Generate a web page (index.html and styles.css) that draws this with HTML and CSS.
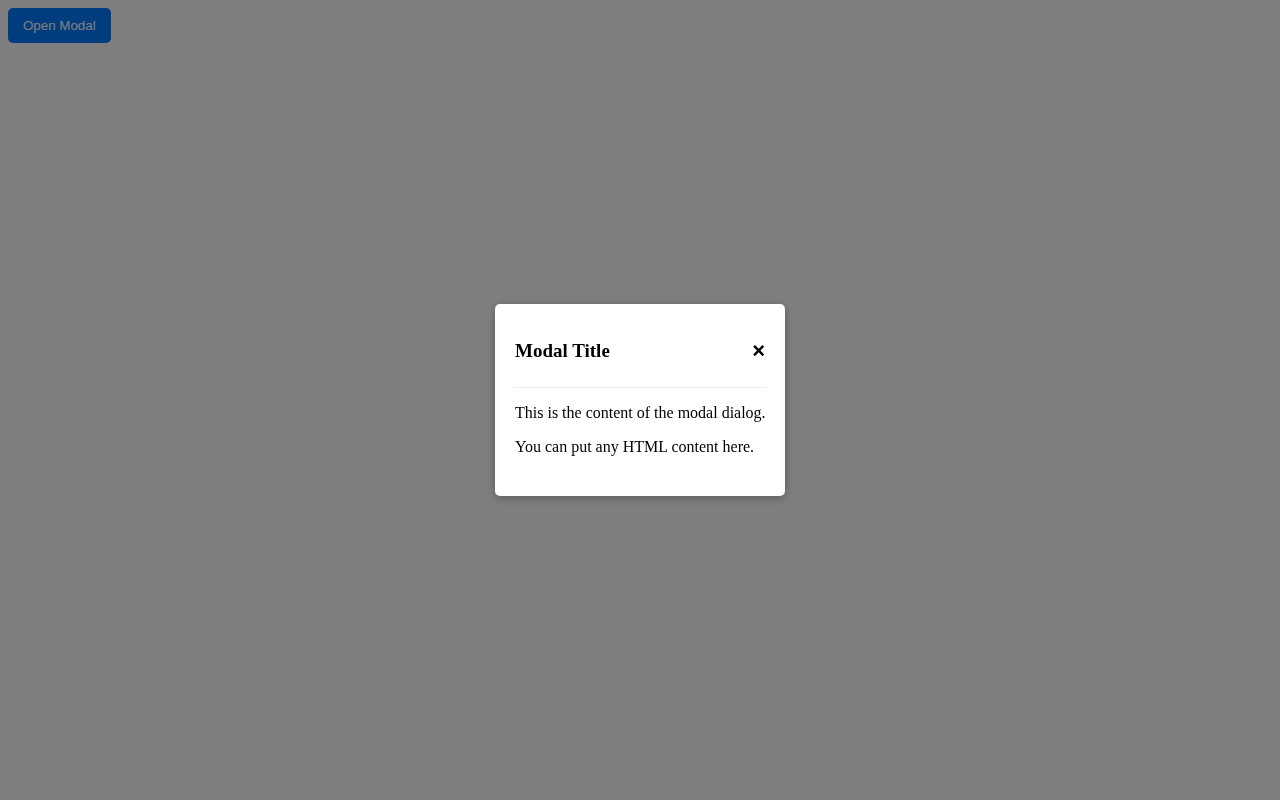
FILE: index.html
```html
<!DOCTYPE html>
<html>
<head>
<meta charset="utf-8">
<link rel="stylesheet" href="styles.css">
</head>
<body>
<button class="open-btn">Open Modal</button>
<div class="overlay">
  <div class="modal">
    <div class="modal-header">
      <h3 class="modal-title">Modal Title</h3>
      <span class="close">&times;</span>
    </div>
    <div class="modal-body">
      <p>This is the content of the modal dialog.</p>
      <p>You can put any HTML content here.</p>
    </div>
  </div>
</div>
</body>
</html>
```

FILE: styles.css
```css
body {
  margin: 8px;
  font-family: "Liberation Serif", "Times New Roman", serif;
}
.open-btn {
  background: #007bff;
  color: #fff;
  border: none;
  border-radius: 5px;
  padding: 10px 15px;
  font-family: "Liberation Sans", Arial, sans-serif;
  font-size: 13.333px;
  line-height: 15px;
}
.overlay {
  position: fixed;
  inset: 0;
  background: rgba(0, 0, 0, 0.5);
  display: flex;
  align-items: center;
  justify-content: center;
}
.modal {
  background: #fff;
  width: 250px;
  padding: 20px 20px 24px;
  border-radius: 5px;
  box-shadow: 0 2px 10px rgba(0, 0, 0, 0.3);
}
.modal-header {
  display: flex;
  justify-content: space-between;
  align-items: center;
  border-bottom: 1px solid #eee;
  padding-bottom: 10px;
}
.modal-title {
  margin: 15px 0;
  font-size: 19px;
  line-height: 23px;
}
.close {
  font-family: "Liberation Sans", Arial, sans-serif;
  font-size: 22px;
  font-weight: bold;
  line-height: 1;
}
.modal-body {
  white-space: nowrap;
}
.modal-body p {
  margin: 16px 0;
}
```
